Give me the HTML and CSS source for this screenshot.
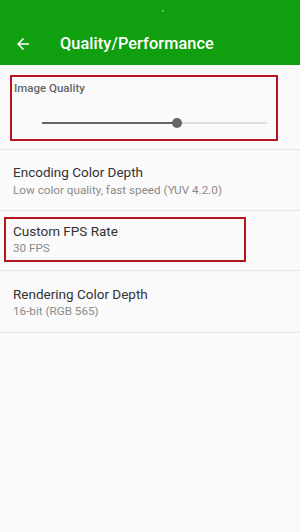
FILE: index.html
```html
<!DOCTYPE html>
<html lang="en">

<head>
    <meta charset="UTF-8" />
    <meta name="viewport" content="width=device-width, initial-scale=1.0" />
    <title>Quality/Performance</title>
    <link rel="stylesheet" href="styles.css">
</head>

<body>
    <header class="appbar">
        <div class="status"><span class="status-dot"></span></div>
        <div class="toolbar">
            <svg class="back" viewBox="0 0 24 24" width="18" height="18">
                <path d="M20 11H7.83l5.59-5.59L12 4l-8 8 8 8 1.41-1.41L7.83 13H20v-2z" fill="#fff" />
            </svg>
            <h1>Quality/Performance</h1>
        </div>
    </header>

    <div class="prefs">
        <div class="pref pref-slider">
            <div class="mark mark-wide">
                <div class="label">Image Quality</div>
                <div class="slider">
                    <div class="track-on" style="width: 60%"></div>
                    <div class="thumb"></div>
                    <div class="track-off"></div>
                </div>
            </div>
        </div>

        <div class="pref pref-encoding">
            <div class="title">Encoding Color Depth</div>
            <div class="summary">Low color quality, fast speed (YUV 4.2.0)</div>
        </div>

        <div class="pref pref-marked">
            <div class="mark mark-narrow">
                <div class="title">Custom FPS Rate</div>
                <div class="summary">30 FPS</div>
            </div>
        </div>

        <div class="pref pref-rendering">
            <div class="title">Rendering Color Depth</div>
            <div class="summary">16-bit (RGB 565)</div>
        </div>
    </div>
</body>

</html>
```

FILE: styles.css
```css
body,
html {
    margin: 0;
    padding: 0;
    height: 100%;
    background: #fafafa;
    font-family: Roboto, "Noto Sans", sans-serif;
}

.appbar {
    background: #0f9f0f;
    color: #fff;
}

.status {
    height: 22px;
    display: flex;
    justify-content: center;
    align-items: center;
}

.status-dot {
    width: 2px;
    height: 2px;
    margin-left: 26px;
    background: #6fcf6f;
    border-radius: 50%;
}

.toolbar {
    height: 43px;
    display: flex;
    align-items: center;
    padding-left: 14px;
}

.back {
    display: block;
}

.toolbar h1 {
    margin: 0 0 0 28px;
    font-size: 16.3px;
    font-weight: 500;
    letter-spacing: 0.1px;
}

.pref {
    border-bottom: 1px solid #e6e6e6;
    padding: 0 13px;
}

.title {
    font-size: 13.5px;
    line-height: 17px;
    color: #333;
}

.summary {
    font-size: 11.7px;
    line-height: 17px;
    color: #8a8a8a;
}

.mark {
    border: 2px solid #b3161c;
}

.pref-slider {
    padding: 10px 22px 8px 10px;
}

.mark-wide {
    height: 62px;
    padding-left: 2px;
}

.label {
    margin-top: 4px;
    font-size: 11.5px;
    line-height: 14px;
    font-weight: 500;
    color: #666;
}

.slider {
    display: flex;
    align-items: center;
    margin: 23px 9px 0 28px;
    height: 10px;
}

.track-on {
    height: 2px;
    background: #666;
}

.thumb {
    width: 10px;
    height: 10px;
    border-radius: 50%;
    background: #666;
    margin: 0 -5px;
    position: relative;
}

.track-off {
    flex: 1;
    height: 2px;
    background: #ddd;
}

.pref-encoding {
    padding-top: 14px;
    padding-bottom: 11px;
}

.pref-encoding .summary {
    line-height: 18px;
}

.pref-marked {
    padding: 6px 0 8px 4px;
}

.mark-narrow {
    width: 231px;
    padding: 4px 0 3px 7px;
}

.pref-rendering {
    padding-top: 15px;
    padding-bottom: 12px;
}
```
